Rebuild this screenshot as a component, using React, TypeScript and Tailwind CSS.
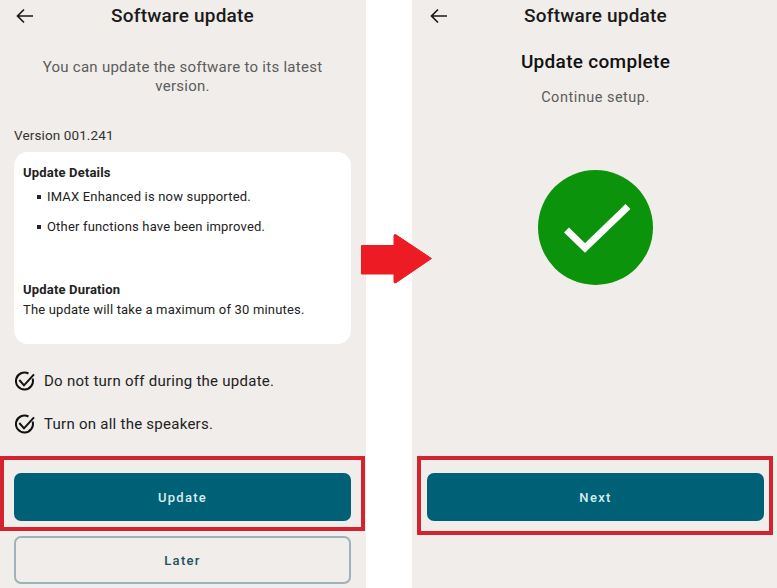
import React from 'react';

const Header = () => (
  <div className="relative flex h-[33px] items-center justify-center">
    <svg className="absolute left-[15px] top-[6px] h-[20px] w-[20px] text-[#1a1a1a]" viewBox="0 0 20 20" fill="none" stroke="currentColor" strokeWidth="1.7">
      <path d="M18 10H2.5M9 3.5L2.5 10L9 16.5" />
    </svg>
    <h1 className="text-[19px] font-medium tracking-[0.2px] text-[#1a1a1a]">Software update</h1>
  </div>
);

const CheckItem = ({ text }: { text: string }) => (
  <div className="flex h-[20px] items-center gap-[8px] pl-[15px] text-[15px] tracking-[0.26px] text-[#222]">
    <svg className="h-[21px] w-[21px] shrink-0" viewBox="0 0 21 21" fill="none" stroke="#111" strokeWidth="2">
      <path d="M17.6 7.5A8.5 8.5 0 1 1 13.5 2.5" />
      <path d="M4.3 9L9 14.3L19 3.3" />
    </svg>
    {text}
  </div>
);

const App: React.FC = () => {
  return (
    <div className="flex h-[588px] w-[777px] overflow-hidden bg-white font-['Roboto',sans-serif]">
      {/* Left screen */}
      <div className="relative flex w-[366px] flex-col bg-[#f0edea] pr-[1px]">
        <Header />
        <p className="mt-[25px] px-[30px] text-center text-[15px] leading-[19px] tracking-[0.27px] text-[#5c5c5c]">
          You can update the software to its latest version.
        </p>
        <p className="ml-[14px] mt-[31px] text-[13.5px] leading-[16px] tracking-[0.12px] text-[#333]">Version 001.241</p>
        <div className="mx-[14px] mt-[9px] h-[192px] rounded-[14px] bg-white px-[9px] pt-[13px] text-[13px] leading-[16px] tracking-[0.18px] text-[#222]">
          <h2 className="font-bold">Update Details</h2>
          <ul className="mt-[8px] flex flex-col gap-[14px] pl-[14px]">
            <li className="flex items-center gap-[6px]"><span className="h-[4px] w-[4px] bg-[#222]" />IMAX Enhanced is now supported.</li>
            <li className="flex items-center gap-[6px]"><span className="h-[4px] w-[4px] bg-[#222]" />Other functions have been improved.</li>
          </ul>
          <h2 className="mt-[47px] font-bold">Update Duration</h2>
          <p className="mt-[4px]">The update will take a maximum of 30 minutes.</p>
        </div>
        <div className="mt-[27px] flex flex-col gap-[23px]">
          <CheckItem text="Do not turn off during the update." />
          <CheckItem text="Turn on all the speakers." />
        </div>
        <button className="mx-[14px] mt-[39px] h-[48px] rounded-[7px] bg-[#006076] pt-[1px] text-[13px] font-medium tracking-[1.3px] text-[#d9eef0]">Update</button>
        <button className="mx-[14px] mt-[15px] h-[48px] rounded-[7px] border-2 border-[#9db2bb] pt-[1px] text-[13px] font-medium tracking-[1.3px] text-[#22505f]">Later</button>
        <div className="absolute left-0 top-[456px] h-[75px] w-[365px] border-[4px] border-[#d2232e]" />
      </div>

      {/* Gap between the screens */}
      <div className="w-[46px]" />

      {/* Right screen */}
      <div className="relative flex w-[365px] flex-col items-stretch bg-[#f0edea] pl-[2px]">
        <Header />
        <h2 className="mt-[17px] text-center text-[19px] font-medium leading-[24px] tracking-[0.3px] text-[#111]">Update complete</h2>
        <p className="mt-[15px] text-center text-[14.5px] leading-[18px] tracking-[0.5px] text-[#5c5c5c]">Continue setup.</p>
        <div className="mt-[63px] flex justify-center">
          <div className="flex h-[115px] w-[115px] items-center justify-center rounded-full bg-[#0b930b]">
            <svg className="h-[115px] w-[115px]" viewBox="0 0 115 115" fill="none">
              <path d="M28.5 60L47 78L90 36.5" stroke="white" strokeWidth="7" />
            </svg>
          </div>
        </div>
        <button className="mx-[13px] mt-[188px] h-[48px] rounded-[7px] bg-[#006076] pt-[1px] text-[13px] font-medium tracking-[1.3px] text-[#d9eef0]">Next</button>
        <div className="absolute left-[5px] top-[456px] h-[79px] w-[356px] border-[4px] border-[#d2232e]" />
      </div>

      {/* Arrow over both */}
      <svg className="absolute left-[361px] top-[234px] h-[50px] w-[71px]" viewBox="0 0 71 50">
        <path d="M0.5 11.5H33V1.5Q33 0 35 0.8L70.5 24.5L35 48.7Q33 49.5 33 48V40H0.5Z" fill="#ed1c24" stroke="#ed1c24" strokeWidth="1" strokeLinejoin="round" />
      </svg>
    </div>
  );
};

export default App;
